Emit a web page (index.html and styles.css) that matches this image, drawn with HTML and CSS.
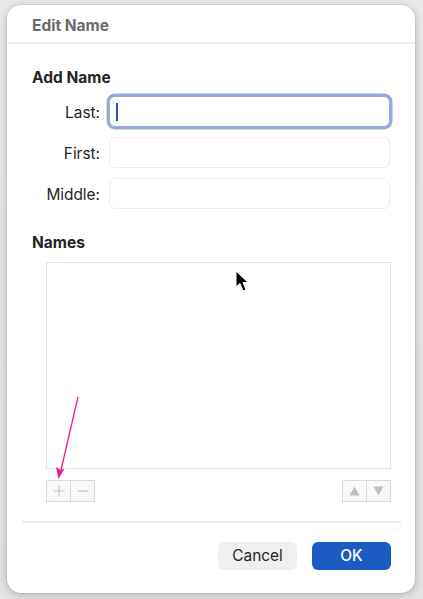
FILE: index.html
```html
<!DOCTYPE html>
<html>
<head>
<meta charset="utf-8">
<link rel="stylesheet" href="styles.css">
</head>
<body>
<div class="window">
  <div class="titlebar"><span class="title">Edit Name</span></div>
  <div class="content">
    <div class="heading first-heading">Add Name</div>
    <div class="form">
      <label class="label">Last:</label>
      <div class="field focused"><span class="caret"></span></div>
      <label class="label">First:</label>
      <div class="field"></div>
      <label class="label">Middle:</label>
      <div class="field"></div>
    </div>
    <div class="heading names-heading">Names</div>
    <div class="list"></div>
    <div class="toolbar">
      <div class="seg">
        <div class="sbtn"><svg width="12" height="12" viewBox="0 0 12 12"><path d="M6 0.5V11.5M0.5 6H11.5" stroke="#c2c2c2" stroke-width="1.2" fill="none"/></svg></div>
        <div class="sbtn"><svg width="12" height="12" viewBox="0 0 12 12"><path d="M0.5 6H11.5" stroke="#c2c2c2" stroke-width="1.2" fill="none"/></svg></div>
      </div>
      <div class="seg">
        <div class="sbtn"><svg width="11" height="10" viewBox="0 0 11 10"><path d="M5.5 0.5L10.5 9.5H0.5Z" fill="#bebebe"/></svg></div>
        <div class="sbtn"><svg width="11" height="10" viewBox="0 0 11 10"><path d="M0.5 0.5H10.5L5.5 9.5Z" fill="#bebebe"/></svg></div>
      </div>
    </div>
    <div class="separator"></div>
    <div class="buttons">
      <button class="btn cancel">Cancel</button>
      <button class="btn ok">OK</button>
    </div>
  </div>
</div>
<svg class="overlay" width="423" height="599" viewBox="0 0 423 599">
  <path d="M236 271 L236 287 L240 283.5 L243 291 L246 289.8 L243 282.5 L248 282.5 Z" fill="#000" stroke="#fff" stroke-width="1" stroke-linejoin="round"/>
  <line x1="78" y1="397" x2="61" y2="470" stroke="#ee1a8f" stroke-width="1.3"/>
  <path d="M58.5 479 L56 467 L60.5 470 L64.5 468.5 Z" fill="#ee1a8f"/>
</svg>
</body>
</html>
```
FILE: styles.css
```css
html, body {
  margin: 0;
  padding: 0;
}
body {
  width: 423px;
  height: 599px;
  background: linear-gradient(#e9e9e9, #e4e4e4);
  font-family: Inter, "Noto Sans", sans-serif;
  position: relative;
  overflow: hidden;
}
.window {
  position: absolute;
  left: 7px;
  top: 5px;
  width: 408px;
  height: 588px;
  background: #fff;
  border-radius: 14px;
  box-shadow: 0 0 0 0.5px rgba(0,0,0,0.12), 0 2px 10px rgba(0,0,0,0.22);
  display: flex;
  flex-direction: column;
}
.titlebar {
  height: 34px;
  padding-top: 3px;
  border-bottom: 2px solid #f1f1f1;
  display: flex;
  align-items: center;
  padding-left: 25px;
}
.title {
  font-size: 15.5px;
  font-weight: 700;
  color: #6b6b6b;
}
.content {
  padding: 0 25px;
  display: flex;
  flex-direction: column;
}
.heading {
  font-size: 15.5px;
  font-weight: 700;
  color: #252525;
  line-height: 18px;
  height: 18px;
}
.first-heading {
  margin-top: 25px;
}
.form {
  margin-top: 9px;
  display: grid;
  grid-template-columns: 68px 281px;
  column-gap: 9px;
  row-gap: 10px;
  grid-auto-rows: 31px;
  align-items: center;
}
.label {
  text-align: right;
  font-size: 15.4px;
  color: #262626;
  padding-top: 1px;
}
.field {
  height: 31px;
  box-sizing: border-box;
  border: 1px solid #ececec;
  border-radius: 6px;
  background: #fff;
  display: flex;
  align-items: center;
}
.field.focused {
  border: 1px solid #9aaad8;
  box-shadow: 0 0 0 2.5px #97a8dc;
}
.caret {
  width: 2px;
  height: 18px;
  background: #1f56c2;
  margin-left: 6px;
}
.names-heading {
  margin-top: 25px;
}
.list {
  margin: 10px -1px 0 14px;
  height: 207px;
  box-sizing: border-box;
  border: 1px solid #e2e2e2;
  background: #fff;
}
.toolbar {
  margin: 11px -1px 0 14px;
  height: 22px;
  display: flex;
  justify-content: space-between;
}
.seg {
  display: flex;
  border: 1px solid #dadada;
  background: #f8f8f8;
}
.sbtn {
  width: 23px;
  height: 20px;
  display: flex;
  align-items: center;
  justify-content: center;
}
.sbtn + .sbtn {
  border-left: 1px solid #dadada;
}
.separator {
  margin: 19px -11px 0 -10px;
  height: 1.5px;
  background: #ececec;
}
.buttons {
  margin: 19px -1px 0 0;
  display: flex;
  justify-content: flex-end;
  gap: 15px;
}
.btn {
  width: 79px;
  height: 28px;
  border: none;
  border-radius: 6px;
  font-family: Inter, "Noto Sans", sans-serif;
  font-size: 15.4px;
  padding: 0;
}
.cancel {
  background: #efefef;
  color: #262626;
}
.ok {
  background: #1b5bc1;
  color: #fff;
  font-weight: 500;
}
.overlay {
  position: absolute;
  left: 0;
  top: 0;
  pointer-events: none;
}
```
